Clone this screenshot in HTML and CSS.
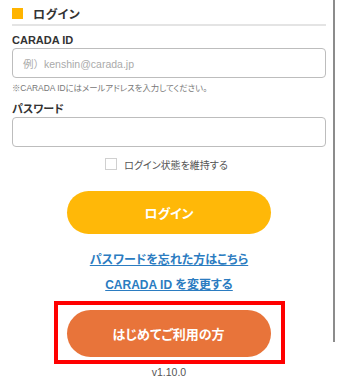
FILE: index.html
```html
<!DOCTYPE html>
<html lang="ja">
<head>
<meta charset="utf-8">
<link rel="stylesheet" href="styles.css">
</head>
<body>
<div class="page">
  <div class="heading"><span class="mark"></span><h1 class="title">ログイン</h1></div>
  <div class="form">
    <div class="label">CARADA ID</div>
    <div class="input"><span class="placeholder">例）kenshin@carada.jp</span></div>
    <p class="note">※CARADA IDにはメールアドレスを入力してください。</p>
    <div class="label label-pw">パスワード</div>
    <div class="input"></div>
    <div class="remember"><span class="checkbox"></span><span class="remember-text">ログイン状態を維持する</span></div>
    <div class="btn btn-login">ログイン</div>
    <a class="link link-first">パスワードを忘れた方はこちら</a>
    <a class="link link-second">CARADA ID を変更する</a>
    <div class="highlight">
      <div class="btn btn-first">はじめてご利用の方</div>
    </div>
    <p class="version">v1.10.0</p>
  </div>
</div>
<div class="scrollbar"></div>
</body>
</html>
```

FILE: styles.css
```css
* { box-sizing: border-box; }
html, body { margin: 0; padding: 0; background: #fff; }
body {
  width: 338px;
  height: 382px;
  overflow: hidden;
  position: relative;
  font-family: "Liberation Sans", "Noto Sans CJK JP", sans-serif;
  font-feature-settings: "palt";
  color: #333;
}
.page { padding: 0 12px; }
.heading {
  height: 26px;
  padding-top: 2px;
  display: flex;
  align-items: center;
  border-bottom: 2px solid #e4e4e4;
}
.mark {
  width: 11px;
  height: 11px;
  background: #ffb400;
  margin-right: 10px;
}
.title {
  margin: 0;
  font-size: 12px;
  font-weight: bold;
  color: #333;
  letter-spacing: 0.5px;
}
.form { display: flex; flex-direction: column; }
.label {
  margin-top: 6px;
  font-size: 11px;
  line-height: 16px;
  font-weight: bold;
  color: #333;
}
.label-pw { margin-top: 7px; }
.input {
  height: 30px;
  border: 1px solid #bdbdbd;
  border-radius: 4px;
  display: flex;
  align-items: center;
  padding-left: 10px;
}
.placeholder { font-size: 10.5px; color: #aaa; font-feature-settings: normal; }
.note {
  margin: 4px 0 0;
  font-size: 8.4px;
  line-height: 12px;
  color: #777;
}
.remember {
  margin-top: 11px;
  height: 12px;
  display: flex;
  align-items: center;
  justify-content: center;
  padding-right: 5px;
}
.checkbox {
  width: 12px;
  height: 12px;
  border: 1px solid #d0d0d0;
  margin-right: 7px;
}
.remember-text { font-size: 10px; color: #555; }
.btn {
  align-self: center;
  width: 204px;
  border-radius: 24px;
  display: flex;
  align-items: center;
  justify-content: center;
  color: #fff;
  font-weight: bold;
  font-size: 13px;
}
.btn-login {
  margin-top: 21px;
  height: 43px;
  background: #ffb808;
}
.link {
  align-self: center;
  font-size: 12px;
  line-height: 16px;
  color: #2b7cc1;
  text-decoration: underline;
  font-weight: bold;
}
.link-first { margin-top: 18px; }
.link-second { margin-top: 9px; }
.highlight {
  align-self: center;
  margin-top: 8px;
  border: 4px solid #ff0000;
  padding: 5px 10px 3px 9px;
  display: flex;
}
.btn-first {
  height: 47px;
  background: #e8743a;
  font-size: 13px;
}
.version {
  margin: 1px 0 0;
  text-align: center;
  font-size: 10.5px;
  line-height: 14px;
  color: #555;
}
.scrollbar {
  position: absolute;
  left: 333px;
  top: 0;
  width: 2px;
  height: 342px;
  background: #8c8c8c;
}
```
